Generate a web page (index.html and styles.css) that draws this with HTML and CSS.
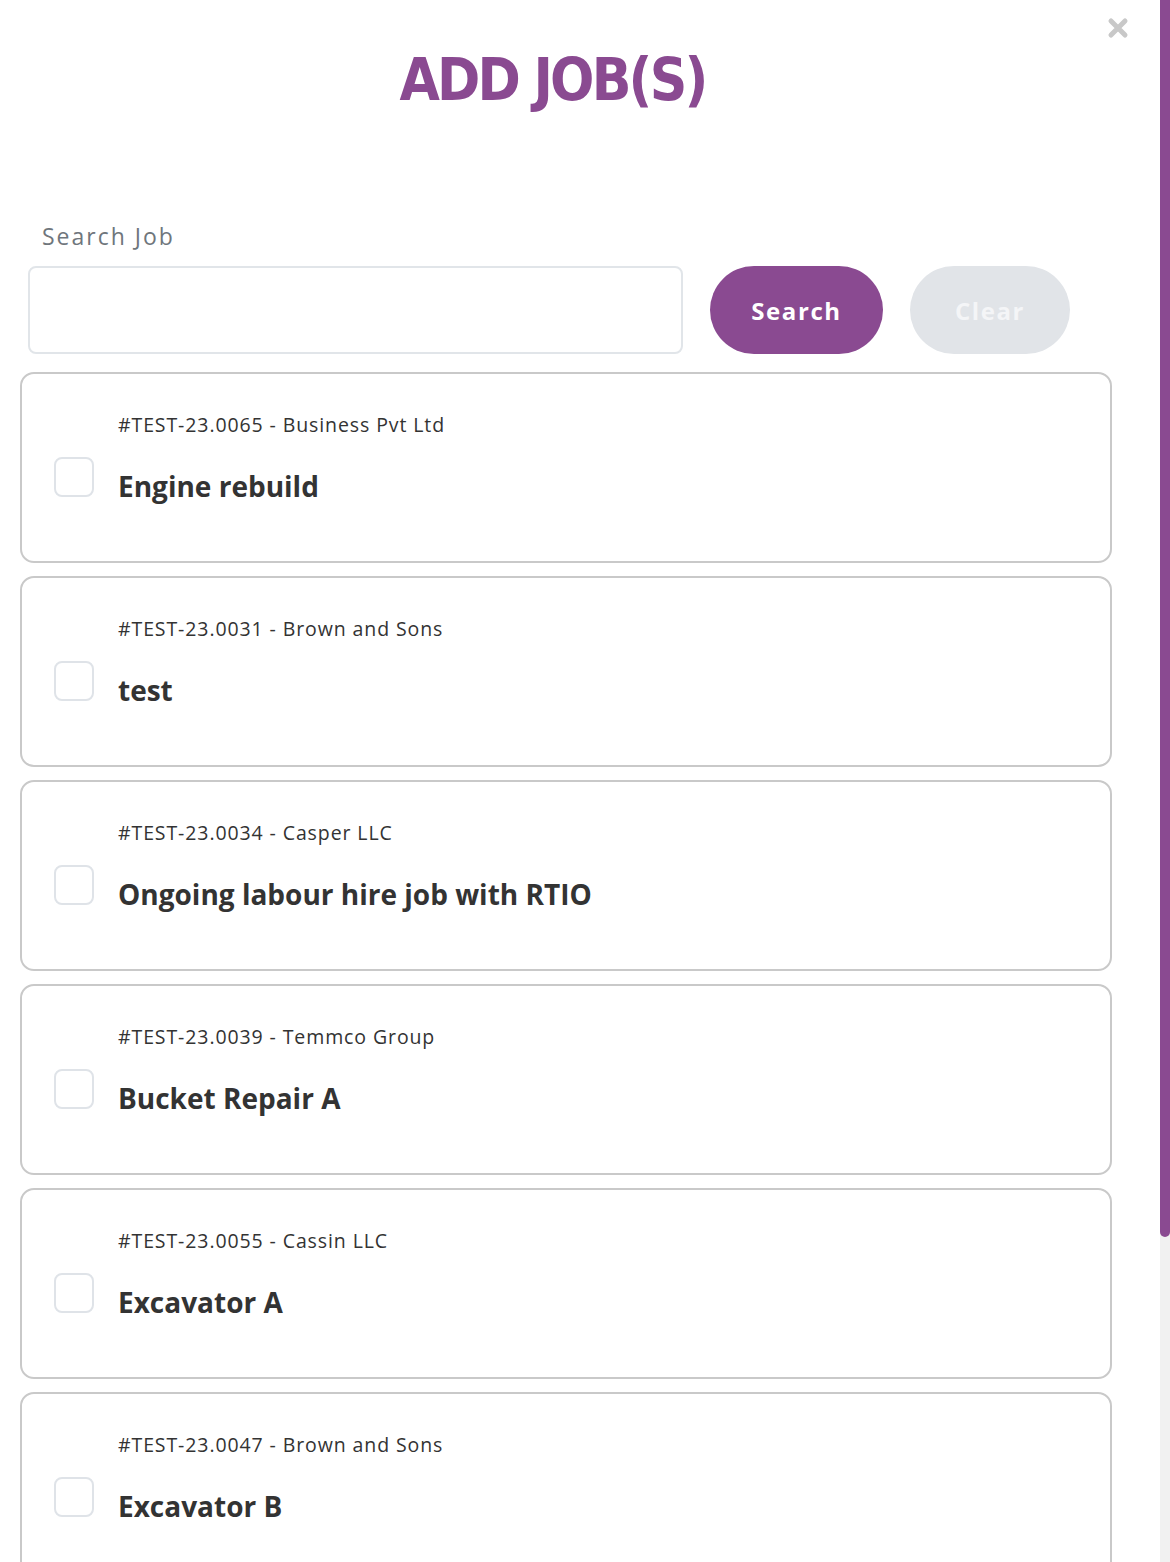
FILE: index.html
```html
<!DOCTYPE html>
<html lang="en">
<head>
    <meta charset="UTF-8">
    <meta name="viewport" content="width=device-width, initial-scale=1.0">
    <title>Add Job(s)</title>
    <link rel="stylesheet" href="styles.css">
</head>
<body>
    <div class="page">
        <div class="modal">
            <div class="head">
                <h1 class="title">ADD JOB(S)</h1>
                <button class="close" aria-label="Close">
                    <svg width="22" height="22" viewBox="0 0 22 22"><path d="M4 4 L18 18 M18 4 L4 18" stroke="#c8c8c8" stroke-width="5" stroke-linecap="round"/></svg>
                </button>
            </div>

            <div class="search">
                <label for="job" class="label">Search Job</label>
                <div class="search-row">
                    <input type="text" id="job">
                    <button class="btn btn-search">Search</button>
                    <button class="btn btn-clear">Clear</button>
                </div>
            </div>

            <div class="jobs">
                <label class="job">
                    <span class="check"></span>
                    <span class="job-text">
                        <span class="job-ref">#TEST-23.0065 - Business Pvt Ltd</span>
                        <span class="job-name">Engine rebuild</span>
                    </span>
                </label>
                <label class="job">
                    <span class="check"></span>
                    <span class="job-text">
                        <span class="job-ref">#TEST-23.0031 - Brown and Sons</span>
                        <span class="job-name">test</span>
                    </span>
                </label>
                <label class="job">
                    <span class="check"></span>
                    <span class="job-text">
                        <span class="job-ref">#TEST-23.0034 - Casper LLC</span>
                        <span class="job-name">Ongoing labour hire job with RTIO</span>
                    </span>
                </label>
                <label class="job">
                    <span class="check"></span>
                    <span class="job-text">
                        <span class="job-ref">#TEST-23.0039 - Temmco Group</span>
                        <span class="job-name">Bucket Repair A</span>
                    </span>
                </label>
                <label class="job">
                    <span class="check"></span>
                    <span class="job-text">
                        <span class="job-ref">#TEST-23.0055 - Cassin LLC</span>
                        <span class="job-name">Excavator A</span>
                    </span>
                </label>
                <label class="job">
                    <span class="check"></span>
                    <span class="job-text">
                        <span class="job-ref">#TEST-23.0047 - Brown and Sons</span>
                        <span class="job-name">Excavator B</span>
                    </span>
                </label>
            </div>
        </div>
        <div class="scrollbar"><div class="thumb"></div></div>
    </div>
</body>
</html>
```

FILE: styles.css
```css
*{
    margin: 0px;
    padding: 0px;
    box-sizing: border-box;
    font-family: "Open Sans", "DejaVu Sans", sans-serif;
}
body{
    background: white;
}
.page{
    display: flex;
    height: 100vh;
    overflow: hidden;
}
.modal{
    flex: 1;
    overflow: hidden;
}
.scrollbar{
    width: 10px;
    background: #f1f1f1;
}
.thumb{
    height: 1237px;
    background: #8a4a91;
    border-radius: 0 0 5px 5px;
}
.head{
    display: flex;
    align-items: flex-start;
    height: 208px;
}
.title{
    flex: 1;
    text-align: center;
    padding-top: 40px;
    font-family: "DejaVu Sans", sans-serif;
    font-stretch: condensed;
    font-weight: 600;
    font-size: 58px;
    letter-spacing: -2.8px;
    color: #8a4a91;
    line-height: 80px;
}
.close{
    width: 55px;
    margin-top: 17px;
    padding-right: 30px;
    background: none;
    border: none;
    display: flex;
    justify-content: center;
}
.search{
    padding: 12px 80px 0 28px;
}
.label{
    display: block;
    padding-left: 14px;
    font-size: 23px;
    letter-spacing: 2px;
    color: #6f767c;
    margin-bottom: 14px;
}
.search-row{
    display: flex;
    gap: 27px;
    height: 88px;
}
.search-row input{
    width: 655px;
    border: 2px solid #e1e5e9;
    border-radius: 8px;
    outline: none;
    font-size: 20px;
    padding: 0 16px;
}
.btn{
    border: none;
    border-radius: 44px;
    font-size: 24px;
    font-weight: 700;
    letter-spacing: 1.6px;
    color: white;
}
.btn-search{
    width: 173px;
    background: #8a4a91;
}
.btn-clear{
    width: 160px;
    background: #e1e4e8;
    color: #f4f5f7;
}
.jobs{
    display: flex;
    flex-direction: column;
    gap: 13px;
    padding: 18px 48px 0 20px;
}
.job{
    flex: none;
    display: flex;
    align-items: center;
    gap: 24px;
    height: 191px;
    border: 2px solid #c9c9c9;
    border-radius: 14px;
    padding: 0 32px;
}
.check{
    flex: none;
    width: 40px;
    height: 40px;
    border: 2px solid #dfe3e8;
    border-radius: 8px;
    margin-top: 18px;
}
.job-text{
    display: flex;
    flex-direction: column;
    gap: 29px;
    margin-bottom: 20px;
    color: #333333;
}
.job-ref{
    font-size: 19.5px;
    letter-spacing: 0.9px;
}
.job-name{
    font-size: 28px;
    font-weight: 700;
}
```
